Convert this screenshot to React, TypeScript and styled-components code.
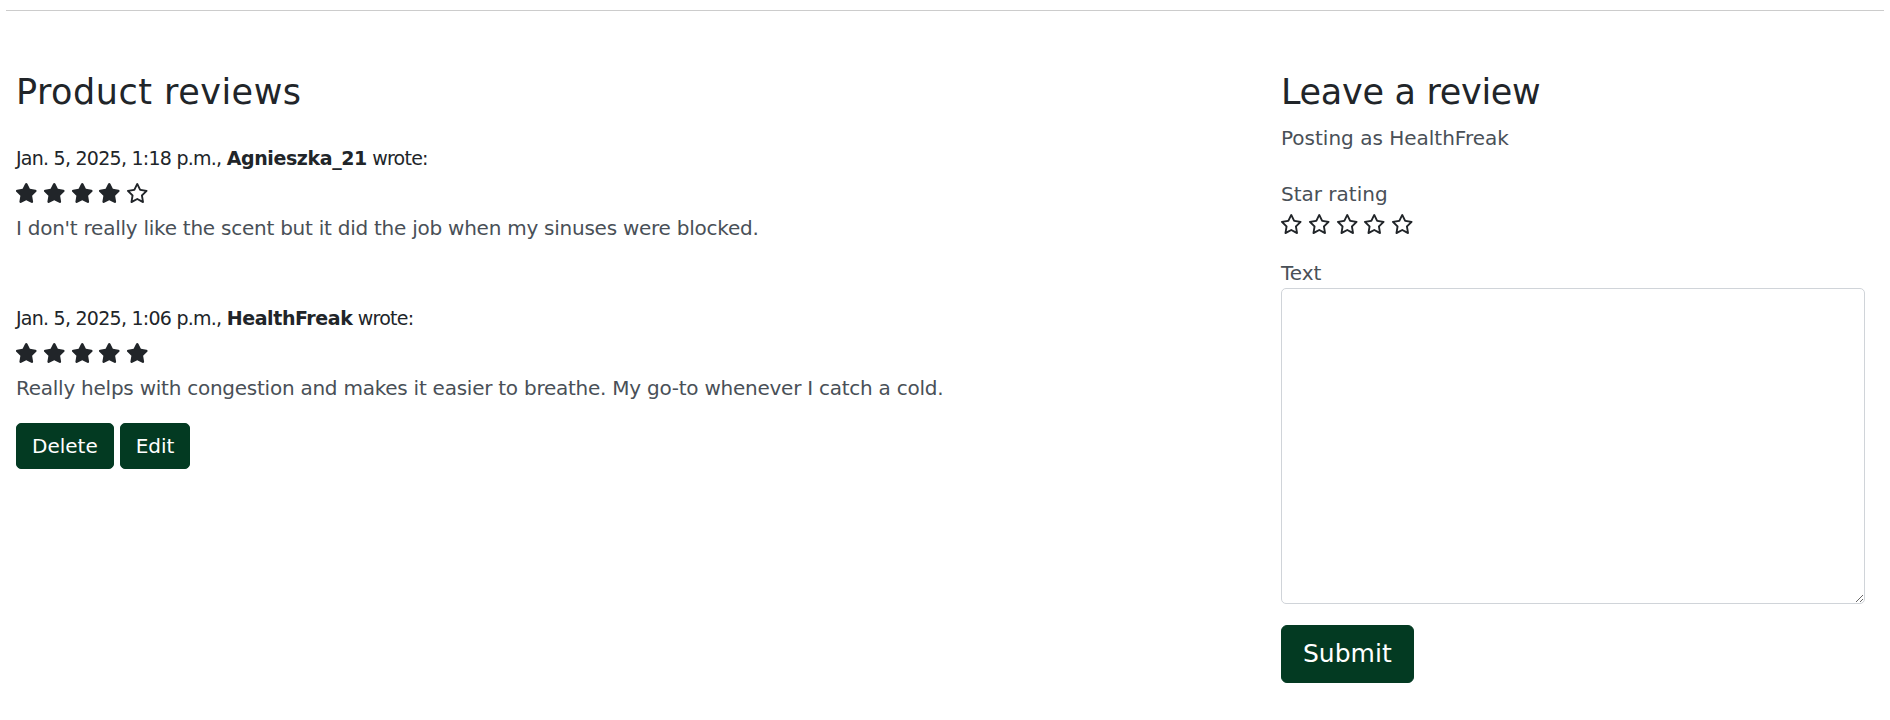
import React from "react";
import styled, { createGlobalStyle } from "styled-components";

const GlobalStyle = createGlobalStyle`
  html, body { margin: 0; padding: 0; background: #ffffff; }
  body {
    font-family: "DejaVu Sans", "Liberation Sans", sans-serif;
    color: #212529;
    font-size: 20px;
    line-height: 1.5;
  }
  * { box-sizing: border-box; }
`;

const FULL_STAR =
  "M316.9 18C311.6 7 300.4 0 288.1 0s-23.4 7-28.8 18L195 150.3 51.4 171.5c-12 1.8-22 10.2-25.7 21.7s-.7 24.2 7.9 32.7L137.8 329 113.2 474.7c-2 12 3 24.2 12.9 31.3s23 8 33.8 2.3l128.3-68.5 128.3 68.5c10.8 5.7 23.9 4.9 33.8-2.3s14.9-19.3 12.9-31.3L438.5 329 542.7 225.9c8.6-8.5 11.7-21.2 7.9-32.7s-13.7-19.9-25.7-21.7L381.2 150.3 316.9 18z";
const EMPTY_STAR =
  "M287.9 0c9.2 0 17.6 5.2 21.6 13.5l68.6 141.3 153.2 22.6c9 1.3 16.5 7.6 19.3 16.3s.5 18.1-5.9 24.5L433.6 328.4l26.2 155.6c1.5 9-2.2 18.1-9.7 23.5s-17.3 6-25.3 1.7l-137-73.2L151 509.1c-8.1 4.3-17.9 3.7-25.3-1.7s-11.2-14.5-9.7-23.5l26.2-155.6L31.1 218.2c-6.5-6.4-8.7-15.9-5.9-24.5s10.3-14.9 19.3-16.3l153.2-22.6L266.3 13.5C270.4 5.2 278.7 0 287.9 0zm0 79L235.4 187.2c-3.5 7.1-10.2 12.1-18.1 13.3L99 217.9 184.9 303c5.5 5.5 8.1 13.3 6.8 21L171.4 443.7l105.2-56.2c7.1-3.8 15.6-3.8 22.6 0l105.2 56.2L384.2 324.1c-1.3-7.7 1.2-15.5 6.8-21l85.9-85.1L358.6 200.5c-7.8-1.2-14.6-6.1-18.1-13.3L287.9 79z";

const Page = styled.div`
  width: 100%;
  min-height: 720px;
`;

const Rule = styled.hr`
  margin: 10px 6px 0;
  border: 0;
  border-top: 1px solid #cccccc;
  height: 0;
`;

const Columns = styled.main`
  display: grid;
  grid-template-columns: 1fr 584px;
  column-gap: 30px;
  padding: 60px 25px 0 16px;
`;

const Column = styled.section`
  display: flex;
  flex-direction: column;
  align-items: flex-start;
`;

const Heading = styled.h3<{ $spacing?: number }>`
  margin: 0 0 10px;
  font-size: 35px;
  line-height: 42px;
  font-weight: 500;
  letter-spacing: ${(p) => p.$spacing ?? 0}px;
  color: #212529;
`;

const ReviewList = styled.div`
  display: flex;
  flex-direction: column;
  gap: 60px;
  padding-top: 20px;
`;

const Review = styled.article`
  display: flex;
  flex-direction: column;
  align-items: flex-start;
`;

const Meta = styled.p`
  margin: 0;
  height: 30px;
  line-height: 30px;
  font-size: 19px;
  letter-spacing: -0.75px;
  color: #212529;
  white-space: nowrap;
`;

const Author = styled.strong`
  font-weight: 700;
  letter-spacing: -0.4px;
`;

const StarRow = styled.div<{ $mt: number }>`
  display: flex;
  gap: 5.3px;
  height: 20px;
  margin: ${(p) => p.$mt}px 0 0 -1px;
  color: #212529;
`;

const StarIcon = styled.svg`
  width: 22.5px;
  height: 20px;
  display: block;
  fill: currentColor;
`;

const ReviewText = styled.p`
  margin: 10px 0 0;
  color: #495057;
  letter-spacing: -0.25px;
  white-space: nowrap;
`;

const Actions = styled.div`
  display: flex;
  gap: 6px;
  margin-top: 20px;
`;

const Button = styled.button<{ $large?: boolean }>`
  font-family: inherit;
  font-size: ${(p) => (p.$large ? "25px" : "20px")};
  line-height: 1.5;
  padding: ${(p) => (p.$large ? "9px 21px" : "7px 15px")};
  background: #033a22;
  color: #ffffff;
  border: 1px solid #033a22;
  border-radius: ${(p) => (p.$large ? "6px" : "5px")};
  cursor: pointer;
`;

const Muted = styled.p`
  margin: 0 0 26px;
  color: #495057;
  height: 30px;
`;

const Label = styled.label<{ $mt?: number }>`
  display: block;
  margin-top: ${(p) => p.$mt ?? 0}px;
  color: #495057;
  height: 30px;
`;

const TextArea = styled.textarea`
  display: block;
  width: 584px;
  height: 316px;
  border: 1px solid #d0d4d9;
  border-radius: 5px;
  font-family: inherit;
  font-size: 20px;
  padding: 7px 15px;
  margin: 0;
`;

const SubmitWrap = styled.div`
  margin-top: 21px;
`;

const Stars: React.FC<{ filled: number; mt: number }> = ({ filled, mt }) => (
  <StarRow $mt={mt}>
    {[0, 1, 2, 3, 4].map((i) => (
      <StarIcon key={i} viewBox="0 0 576 512" aria-hidden="true">
        <path d={i < filled ? FULL_STAR : EMPTY_STAR} />
      </StarIcon>
    ))}
  </StarRow>
);

const reviews = [
  {
    date: "Jan. 5, 2025, 1:18 p.m.",
    author: "Agnieszka_21",
    rating: 4,
    text: "I don't really like the scent but it did the job when my sinuses were blocked.",
    own: false,
  },
  {
    date: "Jan. 5, 2025, 1:06 p.m.",
    author: "HealthFreak",
    rating: 5,
    text: "Really helps with congestion and makes it easier to breathe. My go-to whenever I catch a cold.",
    own: true,
  },
];

export default function App() {
  return (
    <Page>
      <GlobalStyle />
      <Rule />
      <Columns>
        <Column>
          <Heading $spacing={0.5}>Product reviews</Heading>
          <ReviewList>
            {reviews.map((r) => (
              <Review key={r.author}>
                <Meta>
                  {r.date}, <Author>{r.author}</Author> wrote:
                </Meta>
                <Stars filled={r.rating} mt={10} />
                <ReviewText>{r.text}</ReviewText>
                {r.own && (
                  <Actions>
                    <Button>Delete</Button>
                    <Button>Edit</Button>
                  </Actions>
                )}
              </Review>
            ))}
          </ReviewList>
        </Column>
        <Column>
          <Heading $spacing={-0.3}>Leave a review</Heading>
          <Muted>Posting as HealthFreak</Muted>
          <Label>Star rating</Label>
          <Stars filled={0} mt={5} />
          <Label htmlFor="review-text" $mt={24}>
            Text
          </Label>
          <TextArea id="review-text" />
          <SubmitWrap>
            <Button $large>Submit</Button>
          </SubmitWrap>
        </Column>
      </Columns>
    </Page>
  );
}
